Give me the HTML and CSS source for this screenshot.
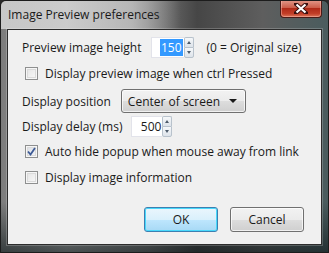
FILE: index.html
```html
<!DOCTYPE html>
<html lang="en">
<head>
    <meta charset="UTF-8">
    <meta name="viewport" content="width=device-width, initial-scale=1.0">
    <title>Image Preview preferences</title>
    <link rel="stylesheet" href="styles.css">
</head>
<body>
    <div class="window">
        <div class="titlebar">
            <span class="title">Image Preview preferences</span>
            <button class="close" type="button" aria-label="Close">
                <svg width="14" height="11" viewBox="0 0 14 11">
                    <path d="M2 1 L12 10 M12 1 L2 10" stroke="#3a1010" stroke-width="4" stroke-linecap="square"/>
                    <path d="M2.5 1.5 L11.5 9.5 M11.5 1.5 L2.5 9.5" stroke="#ffffff" stroke-width="2.2"/>
                </svg>
            </button>
        </div>
        <div class="client">
            <div class="row row1">
                <label for="height">Preview image height</label>
                <div class="spin spin-height">
                    <span class="field"><span class="selected">150</span></span>
                    <span class="arrows"><span class="up"></span><span class="down"></span></span>
                </div>
                <span class="hint">(0 = Original size)</span>
            </div>
            <div class="row row2">
                <span class="check"></span>
                <span>Display preview image when ctrl Pressed</span>
            </div>
            <div class="row row3">
                <label>Display position</label>
                <div class="combo">
                    <span>Center of screen</span>
                    <span class="caret"></span>
                </div>
            </div>
            <div class="row row4">
                <label>Display delay (ms)</label>
                <div class="spin spin-delay">
                    <span class="field">500</span>
                    <span class="arrows"><span class="up"></span><span class="down"></span></span>
                </div>
            </div>
            <div class="row row5">
                <span class="check checked">
                    <svg width="9" height="9" viewBox="0 0 9 9"><path d="M1 4.5 L3.5 7.5 L8 1" fill="none" stroke="#3d5a95" stroke-width="1.8"/></svg>
                </span>
                <span>Auto hide popup when mouse away from link</span>
            </div>
            <div class="row row6">
                <span class="check"></span>
                <span>Display image information</span>
            </div>
            <div class="buttons">
                <button class="btn btn-ok" type="button">OK</button>
                <button class="btn" type="button">Cancel</button>
            </div>
        </div>
    </div>
</body>
</html>
```

FILE: styles.css
```css
* { box-sizing: border-box; }
body { margin: 0; padding: 0; font-family: "Open Sans", "Noto Sans", sans-serif; font-size: 12px; color: #1a1a1a; background: #2a2a2a; }
.window { width: 329px; height: 253px; display: flex; flex-direction: column; border: 1px solid #1c1c1c; border-radius: 6px 6px 0 0; background: linear-gradient(180deg, rgba(0,0,0,0) 0%, rgba(0,0,0,0) 80%, rgba(10,20,22,0.6) 100%), linear-gradient(90deg, #7c7c7c 0%, #a8a8a8 20%, #7a7a7a 45%, #464646 60%, #5e5e5e 80%, #4a5c5e 100%); overflow: hidden; }
.titlebar { height: 28px; display: flex; align-items: flex-start; justify-content: space-between; padding: 0 6px 0 7px; background: linear-gradient(90deg, rgba(225,225,225,0.75) 0%, rgba(215,215,215,0.6) 40%, rgba(200,200,200,0) 55%); }
.title { margin-top: 5px; font-size: 12px; color: #1a1a1a; }
.close { width: 42px; height: 18px; margin-top: -1px; padding: 0; border: 1px solid #4a1a16; border-top: none; border-radius: 0 0 4px 4px; display: flex; align-items: center; justify-content: center; background: linear-gradient(180deg, #e39a8c 0%, #cc5e4b 45%, #b02a18 50%, #c23e28 80%, #dc7458 100%); box-shadow: inset 0 0 0 1px rgba(255,200,190,0.45); }
.client { flex: 1; margin: 0 6px 7px 6px; border: 1px solid #2c2c2c; background: #f0f0f0; padding: 7px 0 0 14px; box-shadow: 0 0 0 1px rgba(255,255,255,0.2); }
.row { display: flex; align-items: center; height: 20px; }
.row1 { height: 21px; }
.row2 { margin-top: 5px; }
.row3 { margin-top: 6px; height: 24px; }
.row4 { margin-top: 3px; height: 21px; }
.row5 { margin-top: 4px; }
.row6 { margin-top: 6px; }
.spin { display: flex; height: 21px; }
.spin-height { margin-left: 9px; }
.spin-delay { margin-left: 9px; }
.field { display: flex; align-items: center; justify-content: flex-end; height: 21px; background: #ffffff; border: 1px solid #e2e3ea; border-right: none; padding-right: 1px; }
.spin-height .field { width: 33px; }
.spin-delay .field { width: 31px; }
.selected { background: #3399ff; color: #ffffff; padding: 0 1px; line-height: 17px; }
.arrows { display: flex; flex-direction: column; width: 10px; height: 21px; }
.arrows span { flex: 1; border: 1px solid #b8c2cc; background: linear-gradient(180deg, #f6f8fa, #dde3ea); position: relative; }
.arrows .up { border-bottom: none; border-radius: 2px 2px 0 0; }
.arrows .down { border-radius: 0 0 2px 2px; }
.arrows .up::after, .arrows .down::after { content: ""; position: absolute; left: 2px; top: 3px; border-left: 2px solid transparent; border-right: 2px solid transparent; }
.arrows .up::after { border-bottom: 3px solid #4d5b6b; }
.arrows .down::after { top: 3px; border-top: 3px solid #4d5b6b; }
.hint { margin-left: 13px; }
.check { width: 13px; height: 13px; margin: 0 7px 0 3px; border: 1px solid #8e8f8f; background: linear-gradient(135deg, #e2e2e2, #fafafa); box-shadow: inset 0 0 0 1px #f6f6f6, inset 0 0 0 2px #dadada; display: flex; align-items: center; justify-content: center; }
.check.checked { background: linear-gradient(135deg, #d8dce4, #f6f7f9); }
.combo { width: 125px; height: 24px; margin-left: 10px; display: flex; align-items: center; justify-content: space-between; padding: 0 8px 0 6px; border: 1px solid #707070; border-radius: 3px; background: linear-gradient(180deg, #f2f2f2 0%, #ebebeb 50%, #dddddd 51%, #cfcfcf 100%); box-shadow: inset 0 0 0 1px rgba(255,255,255,0.7); }
.caret { border-left: 4px solid transparent; border-right: 4px solid transparent; border-top: 4px solid #1a1a1a; }
.buttons { display: flex; justify-content: flex-end; gap: 12px; margin-top: 20px; padding-right: 17px; }
.btn { width: 74px; height: 25px; font-family: inherit; font-size: 12px; color: #1a1a1a; border: 1px solid #707070; border-radius: 3px; background: linear-gradient(180deg, #f2f2f2 0%, #ebebeb 50%, #dddddd 51%, #cfcfcf 100%); box-shadow: inset 0 0 0 1px rgba(255,255,255,0.7); padding: 0; }
.btn-ok { border-color: #3c7fb1; background: linear-gradient(180deg, #eaf6fd 0%, #d9f0fc 50%, #bee6fd 51%, #a7d9f5 100%); box-shadow: inset 0 0 0 1px #48d8fb; }
```
